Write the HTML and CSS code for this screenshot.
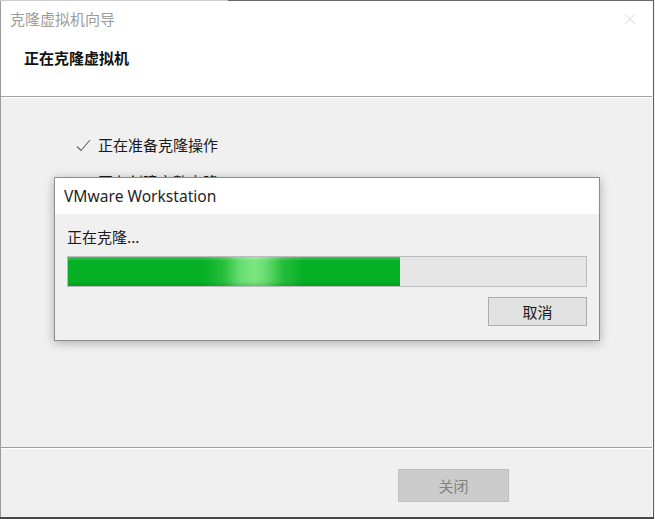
FILE: index.html
```html
<!DOCTYPE html>
<html lang="zh-CN">
<head>
<meta charset="utf-8">
<title>克隆虚拟机向导</title>
<link rel="stylesheet" href="styles.css">
</head>
<body>
<div class="window">
  <div class="topedge"></div>
  <div class="frame">
    <div class="titlebar">
      <span class="title">克隆虚拟机向导</span>
      <svg class="close" width="12" height="12" viewBox="0 0 12 12"><path d="M1 1 L11 11 M11 1 L1 11" stroke="#e6e6e6" stroke-width="1.2" fill="none"/></svg>
    </div>
    <div class="header">正在克隆虚拟机</div>
    <div class="sep"></div>
    <div class="content">
      <ul class="steps">
        <li class="step done"><svg class="check" width="15" height="13" viewBox="0 0 15 13"><path d="M1 7.5 L5 11.5 L14 1" stroke="#666" stroke-width="1.1" fill="none"/></svg><span>正在准备克隆操作</span></li>
        <li class="step"><span class="nocheck"></span><span>正在创建完整克隆</span></li>
      </ul>
    </div>
    <div class="sep"></div>
    <div class="footer">
      <button class="btn disabled" disabled>关闭</button>
    </div>
  </div>

  <div class="modal">
    <div class="modal-title">VMware Workstation</div>
    <div class="modal-body">
      <div class="status">正在克隆...</div>
      <div class="progress"><div class="fill" style="width:332px"></div></div>
      <div class="actions"><button class="btn cancel">取消</button></div>
    </div>
  </div>
</div>
</body>
</html>
```

FILE: styles.css
```css
html, body {
  margin: 0;
  padding: 0;
  background: #f0f0f0;
}
body {
  width: 655px;
  height: 519px;
  overflow: hidden;
  font-family: "Noto Sans CJK SC", "Noto Sans", sans-serif;
  font-size: 15px;
  color: #1a1a1a;
}
.window {
  position: relative;
  width: 654px;
  height: 519px;
  box-sizing: border-box;
  border-right: 1px solid #5d5d5d;
  border-bottom: 2px solid #4a4a4a;
  display: flex;
  flex-direction: column;
}
.topedge {
  height: 1px;
  background: linear-gradient(to right, #cdcdcd 0 228px, #6a6a6a 228px);
}
.frame {
  flex: 1;
  display: flex;
  flex-direction: column;
  border-left: 1px solid #9a9a9a;
  border-right: 1px solid #fafafa;
}
.titlebar {
  height: 36px;
  background: #fff;
  display: flex;
  align-items: center;
  justify-content: space-between;
  padding: 0 16px 0 9px;
}
.title {
  color: #9c9c9c;
  font-size: 15px;
  line-height: 20px;
}
.close {
  display: block;
}
.header {
  height: 59px;
  background: #fff;
  padding-left: 23px;
  font-weight: bold;
  font-size: 15px;
  line-height: 42px;
  color: #111;
}
.sep {
  height: 1px;
  background: #a0a0a0;
  border-bottom: 1px solid #ffffff;
}
.content {
  flex: 1;
  background: #f0f0f0;
  padding: 36px 0 0 75px;
}
.steps {
  list-style: none;
  margin: 0;
  padding: 0;
}
.step {
  display: flex;
  align-items: center;
  gap: 7px;
  height: 22px;
  line-height: 22px;
  margin-bottom: 15px;
  color: #1a1a1a;
}
.check, .nocheck {
  display: block;
  width: 15px;
  height: 13px;
  flex: none;
}
.footer {
  height: 68px;
  background: #f0f0f0;
  display: flex;
  align-items: flex-start;
  justify-content: flex-start;
  padding: 20px 0 0 397px;
  box-sizing: border-box;
}
.btn {
  font-family: "Noto Sans CJK SC", sans-serif;
  font-size: 15px;
  padding: 0;
  border-radius: 0;
  cursor: default;
}
.disabled {
  width: 111px;
  height: 33px;
  background: #cccccc;
  border: 1px solid #bfbfbf;
  color: #838383;
}

/* modal dialog overlay */
.modal {
  position: absolute;
  left: 54px;
  top: 177px;
  width: 546px;
  height: 164px;
  box-sizing: border-box;
  border: 1px solid #8c8c8c;
  background: #f0f0f0;
  box-shadow: 0 2px 10px rgba(0,0,0,0.28);
  display: flex;
  flex-direction: column;
}
.modal-title {
  height: 36px;
  background: #fff;
  font-family: "Noto Sans", "Open Sans", sans-serif;
  font-size: 15.6px;
  line-height: 36px;
  padding-left: 9px;
  color: #1f1f1f;
}
.modal-body {
  flex: 1;
  padding: 12px 12px 0 12px;
}
.status {
  height: 22px;
  line-height: 22px;
  margin-bottom: 8px;
}
.progress {
  width: 518px;
  height: 29px;
  border: 1px solid #bcbcbc;
  background: #e6e6e6;
  box-sizing: content-box;
}
.fill {
  height: 100%;
  background:
    linear-gradient(to bottom, rgba(255,255,255,0.25) 0, rgba(255,255,255,0) 4px, rgba(255,255,255,0) 24px, rgba(0,80,20,0.18) 100%),
    linear-gradient(to right,
      rgba(120,230,120,0) 0,
      rgba(120,230,120,0) 135px,
      rgba(95,215,100,0.35) 155px,
      rgba(120,228,125,0.85) 172px,
      rgba(130,232,135,0.95) 186px,
      rgba(120,228,125,0.85) 198px,
      rgba(95,215,100,0.35) 215px,
      rgba(120,230,120,0) 235px),
    #06b025;
}
.actions {
  display: flex;
  justify-content: flex-end;
  padding-top: 10px;
  padding-right: 0;
}
.cancel {
  width: 99px;
  height: 29px;
  background: #e1e1e1;
  border: 1px solid #adadad;
  color: #1a1a1a;
}
```
